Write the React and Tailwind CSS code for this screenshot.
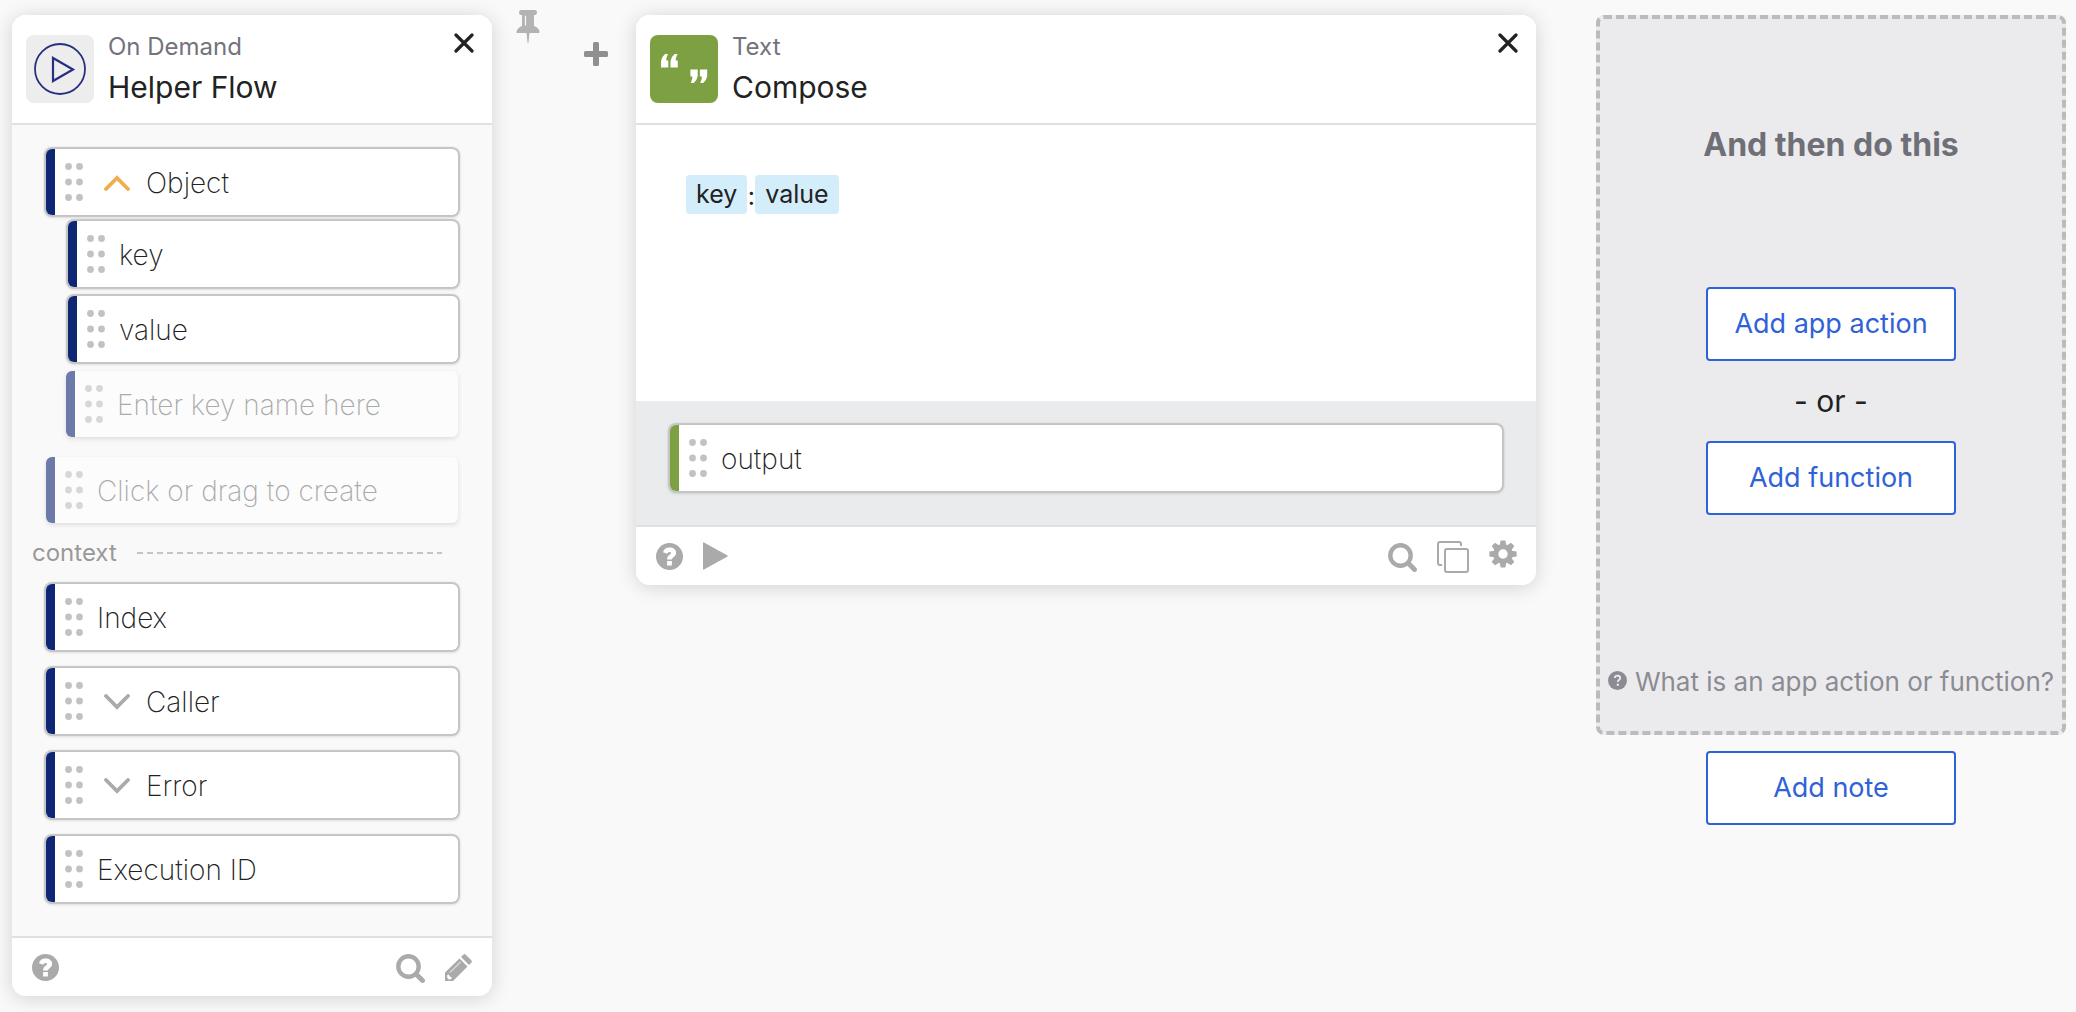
const sans = "font-['Inter','Liberation_Sans',sans-serif]";

function Icon({ className, box, children }) {
  return (
    <svg viewBox={box} className={className} fill="currentColor" aria-hidden="true">
      {children}
    </svg>
  );
}

function PinIcon() {
  return (
    <Icon box="0 0 24 34" className="h-[34px] w-6">
      <path d="M4.500 0h15q1.500.3 1.500 2.300T19.500 5H18v11q5 1.800 5.500 5.500 0 1.500-1 1.500h-9l-1 9.500q-.5 1.500-1 0l-1-9.500h-9q-1.500 0-1-1.500Q1.500 17.800 6 16V5H4.500Q3 4.500 3 2.500T4.500 0z" />
      <path d="M9.500 6v9" stroke="#f9f9f9" strokeWidth="1.200" strokeLinecap="round" />
    </Icon>
  );
}

function PlusIcon() {
  return (
    <Icon box="0 0 24 24" className="size-6">
      <path d="M10.500 0h3q1.500 0 1.500 1.500V9h7.500q1.500 0 1.500 1.500v3q0 1.500-1.500 1.500H15v7.500q0 1.500-1.500 1.500h-3Q9 24 9 22.500V15H1.500Q0 15 0 13.500v-3Q0 9 1.500 9H9V1.500Q9 0 10.500 0z" />
    </Icon>
  );
}

function CloseIcon() {
  return (
    <svg viewBox="0 0 20 20" className="size-5" fill="none" stroke="currentColor" strokeWidth="3.200" strokeLinecap="round" aria-hidden="true">
      <path d="M2 2l16 16M18 2L2 18" />
    </svg>
  );
}

function HelpIcon({ className }) {
  return (
    <svg viewBox="0 0 27 27" className={className} aria-hidden="true">
      <circle cx="13.500" cy="13.500" r="13.500" fill="currentColor" />
      <path d="M7 9.300Q8 4.600 13.500 4.600c4 0 6.600 2 6.600 5.200 0 2.300-1.300 3.600-2.800 4.600-1 .7-1.400 1-1.400 2.100h-4.800c0-2.400.7-3.500 2.300-4.600 1-.7 1.600-1.100 1.600-1.800 0-.8-.6-1.200-1.500-1.200-1.300 0-1.700.7-2.200 1.900zM11.100 18h4.800v4.600h-4.800z" className="fill-white" />
    </svg>
  );
}

function SmallHelpIcon() {
  return (
    <svg viewBox="0 0 19 19" className="-mt-1 size-[19px]" aria-hidden="true">
      <circle cx="9.500" cy="9.500" r="9.500" fill="currentColor" />
      <path d="M6.800 7Q7 4.700 9.600 4.700q2.600.1 2.600 2.300c0 1.700-2.400 1.900-2.400 4" fill="none" stroke="#ebebed" strokeWidth="1.800" />
      <circle cx="9.800" cy="13.700" r="1.200" fill="#ebebed" />
    </svg>
  );
}

function SearchIcon() {
  return (
    <svg viewBox="0 0 29 29" className="size-[29px]" fill="none" stroke="currentColor" aria-hidden="true">
      <circle cx="12.500" cy="12.500" r="10.200" strokeWidth="4.400" />
      <path d="M20.500 20.500l6 6" strokeWidth="4.800" strokeLinecap="round" />
    </svg>
  );
}

function PencilIcon() {
  return (
    <svg viewBox="0 0 27 27" className="size-[27px]" fill="currentColor" aria-hidden="true">
      <path d="M0 27v-8.500L14.500 4.500l8 8L8 27z" />
      <path d="M16 3l2.300-2.300q1.200-1.200 2.500 0l5.500 5.500q1.200 1.300 0 2.500L24 11z" />
      <path d="M5 18.500L15.500 8" stroke="#fff" strokeWidth="1" />
      <path d="M2.200 21l1.600-.4 1 2 2 .9-.6 1.600-2 .6-2-2z" className="fill-white" />
    </svg>
  );
}

function CopyIcon() {
  return (
    <svg viewBox="0 0 32 32" className="size-8" fill="none" stroke="currentColor" strokeWidth="2" aria-hidden="true">
      <rect x="8" y="8" width="23" height="23" rx="2" />
      <path d="M24 5V3q0-2-2-2H3Q1 1 1 3v19q0 2 2 2h2" />
    </svg>
  );
}

function GearIcon() {
  return (
    <svg viewBox="-14 -14 28 28" className="size-7" aria-hidden="true">
      <g fill="currentColor">
        <circle r="10" />
        {[0, 45, 90, 135].map((a) => (
          <path key={a} d="M-3-10l.6-3.600h4.800L3-10v20l-.6 3.600h-4.800L-3 10z" transform={`rotate(${a})`} />
        ))}
      </g>
      <circle r="4.700" className="fill-white" />
    </svg>
  );
}

function Grip() {
  return (
    <svg viewBox="0 0 18 38" className="h-[38px] w-[18px] shrink-0" fill="#c2c2c2" aria-hidden="true">
      {[3.500, 19, 34.500].map((y) => (
        <g key={y}>
          <circle cx="3.500" cy={y} r="3.400" />
          <circle cx="14.500" cy={y} r="3.400" />
        </g>
      ))}
    </svg>
  );
}

function Chevron({ up }) {
  return (
    <svg viewBox="0 0 26 16" className={up ? "h-4 w-[26px] text-[#f0ad4e]" : "h-4 w-[26px] text-[#aaa]"} fill="none" stroke="currentColor" strokeWidth="3.800" strokeLinecap="round" aria-hidden="true">
      <path d={up ? "M2 14L13 3l11 11" : "M2 2l11 11L24 2"} />
    </svg>
  );
}

const rowBase = "flex h-[66px] items-center overflow-hidden rounded-md bg-white";
const rowSolid = "shadow-[0_0_1px_2px_#c4c4c4,0_1px_3px_2px_rgba(0,0,0,0.1)]";
const labelText = "pt-[2px] text-[28px] leading-[34px] font-extralight text-[#222]";

function Row({ label, toggle, green }) {
  return (
    <div className={`${rowBase} ${rowSolid}`}>
      <span className={green ? "w-[9px] shrink-0 self-stretch bg-[#7da042]" : "w-[9px] shrink-0 self-stretch bg-[#0d2775]"} />
      <span className="ml-[10px] flex"><Grip /></span>
      {toggle ? (
        <button type="button" className={`ml-[21px] flex items-center gap-4 ${labelText}`}>
          <Chevron up={toggle === "up"} />
          {label}
        </button>
      ) : (
        <span className={`ml-[14px] ${labelText}`}>{label}</span>
      )}
    </div>
  );
}

function InputRow({ placeholder, className = "" }) {
  return (
    <label className={`${rowBase} opacity-60 shadow-[0_2px_4px_rgba(0,0,0,0.18)] ${className}`}>
      <span className="w-[9px] shrink-0 self-stretch bg-[#0d2775]" />
      <span className="ml-[10px] flex"><Grip /></span>
      <input type="text" aria-label={placeholder} placeholder={placeholder} className="ml-[14px] min-w-0 flex-1 bg-transparent pt-[2px] text-[28px] leading-[34px] font-extralight outline-none placeholder:text-[#777]" />
    </label>
  );
}

function CardHeader({ icon, kind, title }) {
  return (
    <header className="flex h-[110px] items-start border-b-2 border-[#e0e0e0] bg-white pt-5 pl-[14px]">
      {icon}
      <div className="ml-[14px] flex-1">
        <p className="-mt-1 text-[24px] leading-8 text-[#73737b]">{kind}</p>
        <h2 className="mt-1 text-[30px] leading-10 text-[#222]">{title}</h2>
      </div>
      <button type="button" aria-label="Close" className="-mt-[2px] mr-[18px] flex text-[#222]"><CloseIcon /></button>
    </header>
  );
}

const card = "overflow-hidden rounded-[14px] shadow-[0_2px_20px_rgba(0,0,0,0.16)]";
const blueButton = "h-[74px] w-[250px] rounded border-2 border-[#2f62d6] bg-white text-[27px] leading-8 text-[#2f62d6]";

export default function App() {
  return (
    <main className={`${sans} flex min-h-screen items-start bg-[#f9f9f9] pt-[15px] pr-[10px] pb-4 pl-3`}>
      <section className={`w-[480px] shrink-0 bg-[#f9f9f9] ${card}`}>
        <CardHeader
          kind="On Demand"
          title="Helper Flow"
          icon={
            <span className="flex size-[68px] items-center justify-center rounded-lg bg-[#ededed]">
              <svg viewBox="0 0 52 52" className="size-[52px]" fill="none" stroke="#27307f" strokeWidth="1.800" aria-hidden="true">
                <circle cx="26" cy="26" r="25" />
                <path d="M19 15v23l20-11.500z" strokeWidth="2.200" />
              </svg>
            </span>
          }
        />
        <div className="px-[34px] pt-6 pb-[34px]">
          <Row label="Object" toggle="up" />
          <div className="mt-[6px] flex flex-col gap-[9px] pl-[22px]">
            <Row label="key" />
            <Row label="value" />
            <InputRow placeholder="Enter key name here" className="-ml-[2px]" />
          </div>
          <InputRow placeholder="Click or drag to create" className="mt-5" />
          <div className="mt-[14px] mb-[15px] -ml-[14px] flex h-8 items-center">
            <h3 className="text-[24px] leading-8 text-[#999]">context</h3>
            <svg className="mr-4 ml-5 h-[2px] min-w-0 flex-1" aria-hidden="true">
              <line x1="0" y1="1" x2="100%" y2="1" stroke="#c4c4c4" strokeWidth="2" strokeDasharray="6 4" />
            </svg>
          </div>
          <div className="flex flex-col gap-[18px]">
            <Row label="Index" />
            <Row label="Caller" toggle="down" />
            <Row label="Error" toggle="down" />
            <Row label="Execution ID" />
          </div>
        </div>
        <footer className="flex h-[60px] items-center border-t-2 border-[#e0e0e0] bg-white px-5 text-[#aaa]">
          <button type="button" aria-label="Help"><HelpIcon className="size-[27px]" /></button>
          <button type="button" aria-label="Search" className="mt-[2px] ml-auto"><SearchIcon /></button>
          <button type="button" aria-label="Edit" className="ml-5"><PencilIcon /></button>
        </footer>
      </section>

      <div className="flex w-36 shrink-0 items-start">
        <button type="button" aria-label="Pin" className="-mt-[5px] ml-6 text-[#b3b3b3]"><PinIcon /></button>
        <button type="button" aria-label="Insert step" className="mt-[27px] ml-[44px] text-[#909090]"><PlusIcon /></button>
      </div>

      <section className={`min-w-0 flex-1 bg-white ${card}`}>
        <CardHeader
          kind="Text"
          title="Compose"
          icon={
            <span className="flex size-[68px] rounded-lg bg-[#7da042]">
              <svg viewBox="0 0 68 68" className="size-[68px]" fill="#fff" aria-hidden="true">
                <path d="M11 32.500v-6.500q.5-4 4-7h3q-2 4-1.700 6.500h2V32.500z" />
                <path d="M20.500 32.500v-6.500q.5-4 4-7h3q-2 4-1.700 6.500h2V32.500z" />
                <path d="M47.700 34.500v6.500q-.5 4-4 7h-3q2-4 1.700-6.500h-2V34.500z" />
                <path d="M57.200 34.500v6.500q-.5 4-4 7h-3q2-4 1.700-6.500h-2V34.500z" />
              </svg>
            </span>
          }
        />
        <div className="flex h-[276px] items-start px-[50px] pt-[50px] text-[25px] leading-[39px] text-[#222]">
          <span className="rounded bg-[#d4edfa] px-[10px]">key</span>
          <span className="w-2 pt-[2px] text-center">:</span>
          <span className="rounded bg-[#d4edfa] px-[10px]">value</span>
        </div>
        <div className="h-[124px] bg-[#eaebed] px-[34px] pt-6">
          <Row label="output" green />
        </div>
        <footer className="flex h-[60px] items-center border-t-2 border-[#e0e0e0] bg-white pr-[19px] pl-5 text-[#aaa]">
          <button type="button" aria-label="Help"><HelpIcon className="size-[27px]" /></button>
          <button type="button" aria-label="Run" className="ml-5">
            <Icon box="0 0 25 28" className="h-7 w-[25px]"><path d="M0 1Q0 0 1 .400L24.500 13.500Q25 14 24.500 14.500L1 27.600Q0 28 0 27z" /></Icon>
          </button>
          <button type="button" aria-label="Search" className="mt-[2px] ml-auto"><SearchIcon /></button>
          <button type="button" aria-label="Duplicate" className="mt-[2px] ml-5"><CopyIcon /></button>
          <button type="button" aria-label="Settings" className="-mt-1 ml-5"><GearIcon /></button>
        </footer>
      </section>

      <aside className="ml-[60px] flex w-[470px] shrink-0 flex-col items-center">
        <div className="flex h-[720px] w-full flex-col items-center rounded-lg border-4 border-dashed border-[#bbb] bg-[#ebebed]">
          <h2 className="mt-[106px] text-[32px] leading-10 font-bold text-[#6f6f78]">And then do this</h2>
          <button type="button" className={`mt-[122px] ${blueButton}`}>Add app action</button>
          <p className="my-5 text-[30px] leading-10 text-[#222]">- or -</p>
          <button type="button" className={blueButton}>Add function</button>
          <a href="#help" className="mt-[151px] flex items-center gap-2 text-[26px] leading-8 whitespace-nowrap text-[#8b8b94]">
            <SmallHelpIcon />
            What is an app action or function?
          </a>
        </div>
        <button type="button" className={`mt-4 ${blueButton}`}>Add note</button>
      </aside>
    </main>
  );
}
